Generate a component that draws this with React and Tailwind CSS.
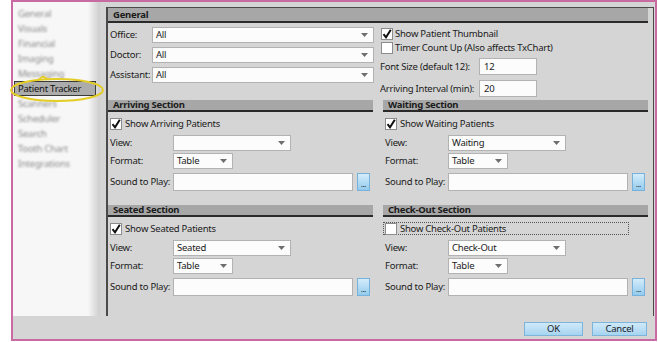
import React from 'react';

const menu = ['General', 'Visuals', 'Financial', 'Imaging', 'Messaging', 'Patient Tracker', 'Scanners', 'Scheduler', 'Search', 'Tooth Chart', 'Integrations'];

const Caret = () => (
  <svg width="7" height="4" viewBox="0 0 7 4" className="shrink-0">
    <path d="M0 0h7L3.5 4z" fill="#6e6e6e" />
  </svg>
);

const Dropdown = ({ value, className }) => (
  <div className={`flex h-[16px] items-center justify-between border border-[#b2b2b2] bg-[#fcfcfc] pl-[3px] pr-[5px] ${className}`}>
    <span className="leading-none">{value}</span>
    <Caret />
  </div>
);

const CheckBox = ({ checked }) => (
  <span className="flex h-[12px] w-[12px] shrink-0 items-center justify-center border border-[#8c8c8c] bg-white">
    {checked && (
      <svg width="10" height="10" viewBox="0 0 10 10">
        <path d="M1.5 5.2L4 8.3L8.8 0.8" stroke="#111" strokeWidth="2" fill="none" />
      </svg>
    )}
  </span>
);

const Header = ({ title, className }) => (
  <div className={`flex items-center border-b-2 border-[#2a2a2a] bg-[#a7a7a7] pl-[5px] font-bold leading-none ${className}`}>
    {title}
  </div>
);

const Row = ({ label, children, className }) => (
  <div className={`flex items-center ${className}`}>
    <span className="w-[65px] shrink-0 pl-[2px] leading-none">{label}</span>
    {children}
  </div>
);

const Browse = () => (
  <div className="flex h-[18px] w-[13px] shrink-0 items-end justify-center border border-[#78b2da] bg-[linear-gradient(#d4ecfa,#92cbee)] pb-[2px] text-[7px] leading-none text-[#222]">
    ...
  </div>
);

const Section = ({ title, label, checked, view, focus }) => (
  <div className="flex flex-col">
    <Header title={title} className="h-[12px]" />
    <div className="mt-[5px] flex h-[13px] items-center pr-[19px]">
      <div className={`flex h-full flex-1 items-center gap-[3px] border border-dotted pl-[1px] ${focus ? 'border-[#555]' : 'border-transparent'}`}>
        <CheckBox checked={checked} />
        <span className="leading-none">{label}</span>
      </div>
    </div>
    <Row label="View:" className="mt-[5px] h-[16px]">
      <Dropdown value={view} className="w-[118px]" />
    </Row>
    <Row label="Format:" className="mt-[2px] h-[16px]">
      <Dropdown value="Table" className="w-[60px]" />
    </Row>
    <Row label="Sound to Play:" className="mt-[4px] h-[18px] pr-[3px]">
      <div className="h-[18px] flex-1 border border-[#b2b2b2] bg-[#fcfcfc]" />
      <div className="ml-[4px]">
        <Browse />
      </div>
    </Row>
  </div>
);

const App = () => {
  return (
    <div className="h-[342px] w-[658px] overflow-hidden whitespace-nowrap bg-white font-['Noto_Sans',sans-serif] text-[9.5px] tracking-[-0.25px] text-[#1b1b1b]">
      <div className="ml-[11px] flex h-[341px] w-[646px] flex-col border-2 border-[#c96aa3] bg-[#d5d5d5]">
        <div className="flex h-[314px]">
          {/* left nav */}
          <div className="relative flex w-[87px] flex-col bg-[linear-gradient(to_right,#f7f7f7_86%,#cdcdcd)] pt-[4px]">
            {menu.map((item) =>
              item === 'Patient Tracker' ? (
                <div key={item} className="ml-[1px] flex h-[15px] w-[82px] items-center border border-[#3a3a3a] bg-[#acacac] pl-[3px] leading-none text-[#111]">
                  {item}
                </div>
              ) : (
                <div key={item} className="flex h-[15px] items-center pl-[5px] leading-none text-[#8a8a8a] blur-[1.2px]">
                  {item}
                </div>
              )
            )}
            <svg className="absolute left-[-5px] top-[72px]" width="98" height="30" viewBox="0 0 98 30">
              <ellipse cx="49" cy="16" rx="46" ry="11" fill="none" stroke="#e4cd25" strokeWidth="2" />
              <path d="M30 6L35 2.5L40 5.2" fill="none" stroke="#e4cd25" strokeWidth="1.8" />
            </svg>
          </div>

          {/* main panel */}
          <div className="ml-[6px] mr-[1px] mt-[5px] flex flex-1 flex-col border-l-2 border-r border-t border-[#4a4a4a] pr-[5px]">
            <Header title="General" className="h-[15px]" />
            <div className="grid grid-cols-[267px_1fr] gap-x-[5px]">
              <div className="mt-[4px] flex flex-col gap-[4px]">
                {['Office:', 'Doctor:', 'Assistant:'].map((label) => (
                  <div key={label} className="flex h-[16px] items-center">
                    <span className="w-[44px] shrink-0 pl-[2px] leading-none">{label}</span>
                    <Dropdown value="All" className="mr-[1px] flex-1" />
                  </div>
                ))}
              </div>
              <div className="mt-[4px] flex flex-col">
                <div className="flex h-[14px] items-center gap-[2px] pl-[1px]">
                  <CheckBox checked />
                  <span className="leading-none">Show Patient Thumbnail</span>
                </div>
                <div className="flex h-[14px] items-center gap-[2px] pl-[1px]">
                  <CheckBox />
                  <span className="leading-none">Timer Count Up (Also affects TxChart)</span>
                </div>
                <div className="mt-[3px] flex h-[17px] items-center">
                  <span className="w-[99px] shrink-0 leading-none">Font Size (default 12):</span>
                  <div className="flex h-[17px] w-[58px] items-center border border-[#b2b2b2] bg-[#fcfcfc] pl-[4px] leading-none">12</div>
                </div>
                <div className="mt-[5px] flex h-[17px] items-center">
                  <span className="w-[99px] shrink-0 leading-none">Arriving Interval (min):</span>
                  <div className="flex h-[17px] w-[58px] items-center border border-[#b2b2b2] bg-[#fcfcfc] pl-[4px] leading-none">20</div>
                </div>
              </div>
            </div>

            <div className="mt-[3px] grid grid-cols-2 gap-x-[10px] gap-y-[14px]">
              <Section title="Arriving Section" label="Show Arriving Patients" checked view="" />
              <Section title="Waiting Section" label="Show Waiting Patients" checked view="Waiting" />
              <Section title="Seated Section" label="Show Seated Patients" checked view="Seated" />
              <Section title="Check-Out Section" label="Show Check-Out Patients" view="Check-Out" focus />
            </div>
          </div>
        </div>

        {/* footer */}
        <div className="flex flex-1 items-start justify-end gap-[9px] pr-[8px] pt-[6px]">
          <button type="button" className="flex h-[14px] w-[59px] items-center justify-center border border-[#7db4da] bg-[linear-gradient(#cfe9f9,#a6d4f1)] leading-none text-[#1b1b1b]">
            OK
          </button>
          <button type="button" className="flex h-[14px] w-[55px] items-center justify-center border border-[#7db4da] bg-[linear-gradient(#cfe9f9,#a6d4f1)] leading-none text-[#1b1b1b]">
            Cancel
          </button>
        </div>
      </div>
    </div>
  );
};

export default App;
